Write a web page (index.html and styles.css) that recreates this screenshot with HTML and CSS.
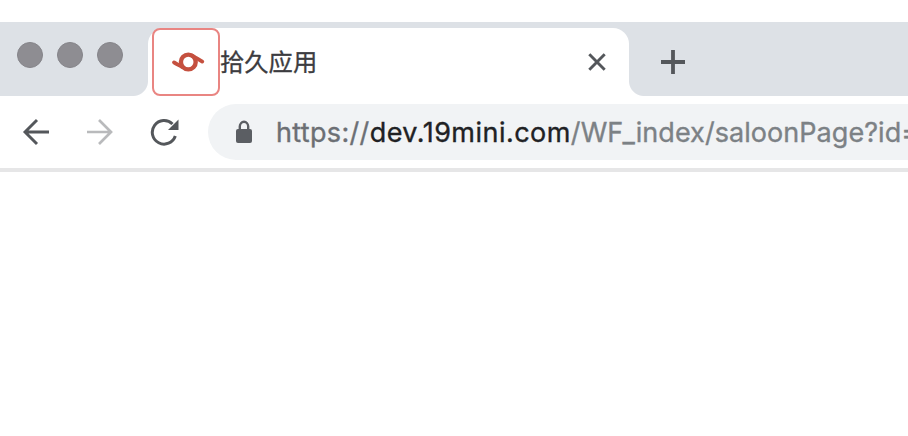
FILE: index.html
```html
<!DOCTYPE html>
<html lang="zh-CN">
<head>
<meta charset="utf-8">
<title>拾久应用</title>
<link rel="stylesheet" href="styles.css">
</head>
<body>
<header class="tab-strip">
  <div class="window-controls"><i></i><i></i><i></i></div>
  <div class="tab">
    <div class="favicon">
      <svg width="34" height="26" viewBox="0 0 34 26" fill="none" stroke="#c5503f" stroke-linecap="round">
        <circle cx="17.3" cy="13" r="7.4" stroke-width="4.4"/>
        <path d="M3 13.4C6 15.5 8 16 11 18M31.3 12.6C28 10.5 25 9 21.5 6.8" stroke-width="3.8"/>
      </svg>
    </div>
    <span class="tab-title">拾久应用</span>
    <svg class="close" width="20" height="20" viewBox="0 0 20 20" fill="none" stroke="#54575b" stroke-width="2.9"><path d="M2.3 2.3l15.4 15.4M17.7 2.3L2.3 17.7"/></svg>
  </div>
  <svg class="new-tab" width="26" height="26" viewBox="0 0 26 26" fill="none" stroke="#54575b" stroke-width="3.8"><path d="M13 1v24M1 13h24"/></svg>
</header>
<nav class="toolbar">
  <svg class="back" width="28" height="28" viewBox="0 0 28 28" fill="none" stroke="#54575b" stroke-width="2.9"><path d="M27 14H3M15 2L3 14l12 12"/></svg>
  <svg class="forward" width="28" height="28" viewBox="0 0 28 28" fill="none" stroke="#b9babc" stroke-width="2.7"><path d="M1 14h24M13 2l12 12-12 12"/></svg>
  <svg class="reload" width="30" height="30" viewBox="0 0 30 30"><path d="M25.3 19A11.8 11.8 0 1 1 22.5 7" fill="none" stroke="#54575b" stroke-width="3"/><path d="M28.5 2.5v10.5H18z" fill="#54575b"/></svg>
  <div class="address">
    <svg class="lock" width="18" height="24" viewBox="0 0 18 24"><path d="M4.8 10V6.5a4.2 4.7 0 0 1 8.4 0V10" fill="none" stroke="#5b5e63" stroke-width="2.4"/><rect x="1" y="9" width="16" height="14" rx="2" fill="#5b5e63"/></svg>
    <div class="url"><span class="scheme">https://</span><span class="host">dev.19mini.com</span><span class="path">/WF_index/saloonPage?id=</span></div>
  </div>
</nav>
</body>
</html>
```

FILE: styles.css
```css
* { box-sizing: border-box; }
body {
  margin: 0;
  padding-top: 22px;
  height: 436px;
  overflow: hidden;
  background: #fff;
  font-family: Inter, "Noto Sans CJK SC", sans-serif;
}
svg { display: block; flex: none; }
.tab-strip {
  display: flex;
  height: 74px;
  padding-top: 6px;
  background: #dde1e6;
}
.window-controls {
  display: flex;
  gap: 14px;
  width: 148px;
  padding: 14px 0 0 17px;
}
.window-controls i {
  width: 26px;
  height: 26px;
  border-radius: 50%;
  background: #8e8d92;
  border: 1px solid #858489;
}
.tab {
  position: relative;
  display: flex;
  align-items: center;
  width: 481px;
  height: 68px;
  padding-left: 4px;
  background: #fff;
  border-radius: 16px 16px 0 0;
}
.tab::before, .tab::after {
  content: "";
  position: absolute;
  bottom: 0;
  width: 15px;
  height: 15px;
}
.tab::before {
  left: -15px;
  background: radial-gradient(circle at 0 0, transparent 14.5px, #fff 15.5px);
}
.tab::after {
  right: -15px;
  background: radial-gradient(circle at 100% 0, transparent 14.5px, #fff 15.5px);
}
.favicon {
  display: flex;
  align-items: center;
  justify-content: center;
  width: 68px;
  height: 68px;
  padding-left: 3px;
  border: 2px solid #e98582;
  border-radius: 8px;
  background: #fff;
}
.tab-title {
  font-size: 24.3px;
  line-height: 34px;
  font-weight: 400;
  color: #3c3c40;
  -webkit-text-stroke: 0.3px #3c3c40;
  white-space: nowrap;
}
.close { margin-left: auto; margin-right: 22px; }
.new-tab { margin: 21px 0 0 31px; }
.toolbar {
  display: flex;
  align-items: center;
  height: 76px;
  padding: 0 0 1px 22px;
  border-bottom: 4px solid #e6e6e7;
}
.forward { margin-left: 36px; }
.reload { margin-left: 36px; }
.address {
  display: flex;
  align-items: center;
  flex: 1;
  min-width: 0;
  height: 56px;
  margin-left: 28px;
  padding-left: 27px;
  border-radius: 28px 0 0 28px;
  background: #f1f3f5;
  overflow: hidden;
}
.url {
  margin-left: 23px;
  padding-top: 2px;
  font-size: 27px;
  line-height: 40px;
  white-space: nowrap;
  -webkit-text-stroke-width: 0.35px;
}
.scheme { color: #6c6f74; letter-spacing: 0.33px; }
.host { color: #202124; letter-spacing: 0.47px; }
.path { color: #7c8185; letter-spacing: 0.06px; }
```
